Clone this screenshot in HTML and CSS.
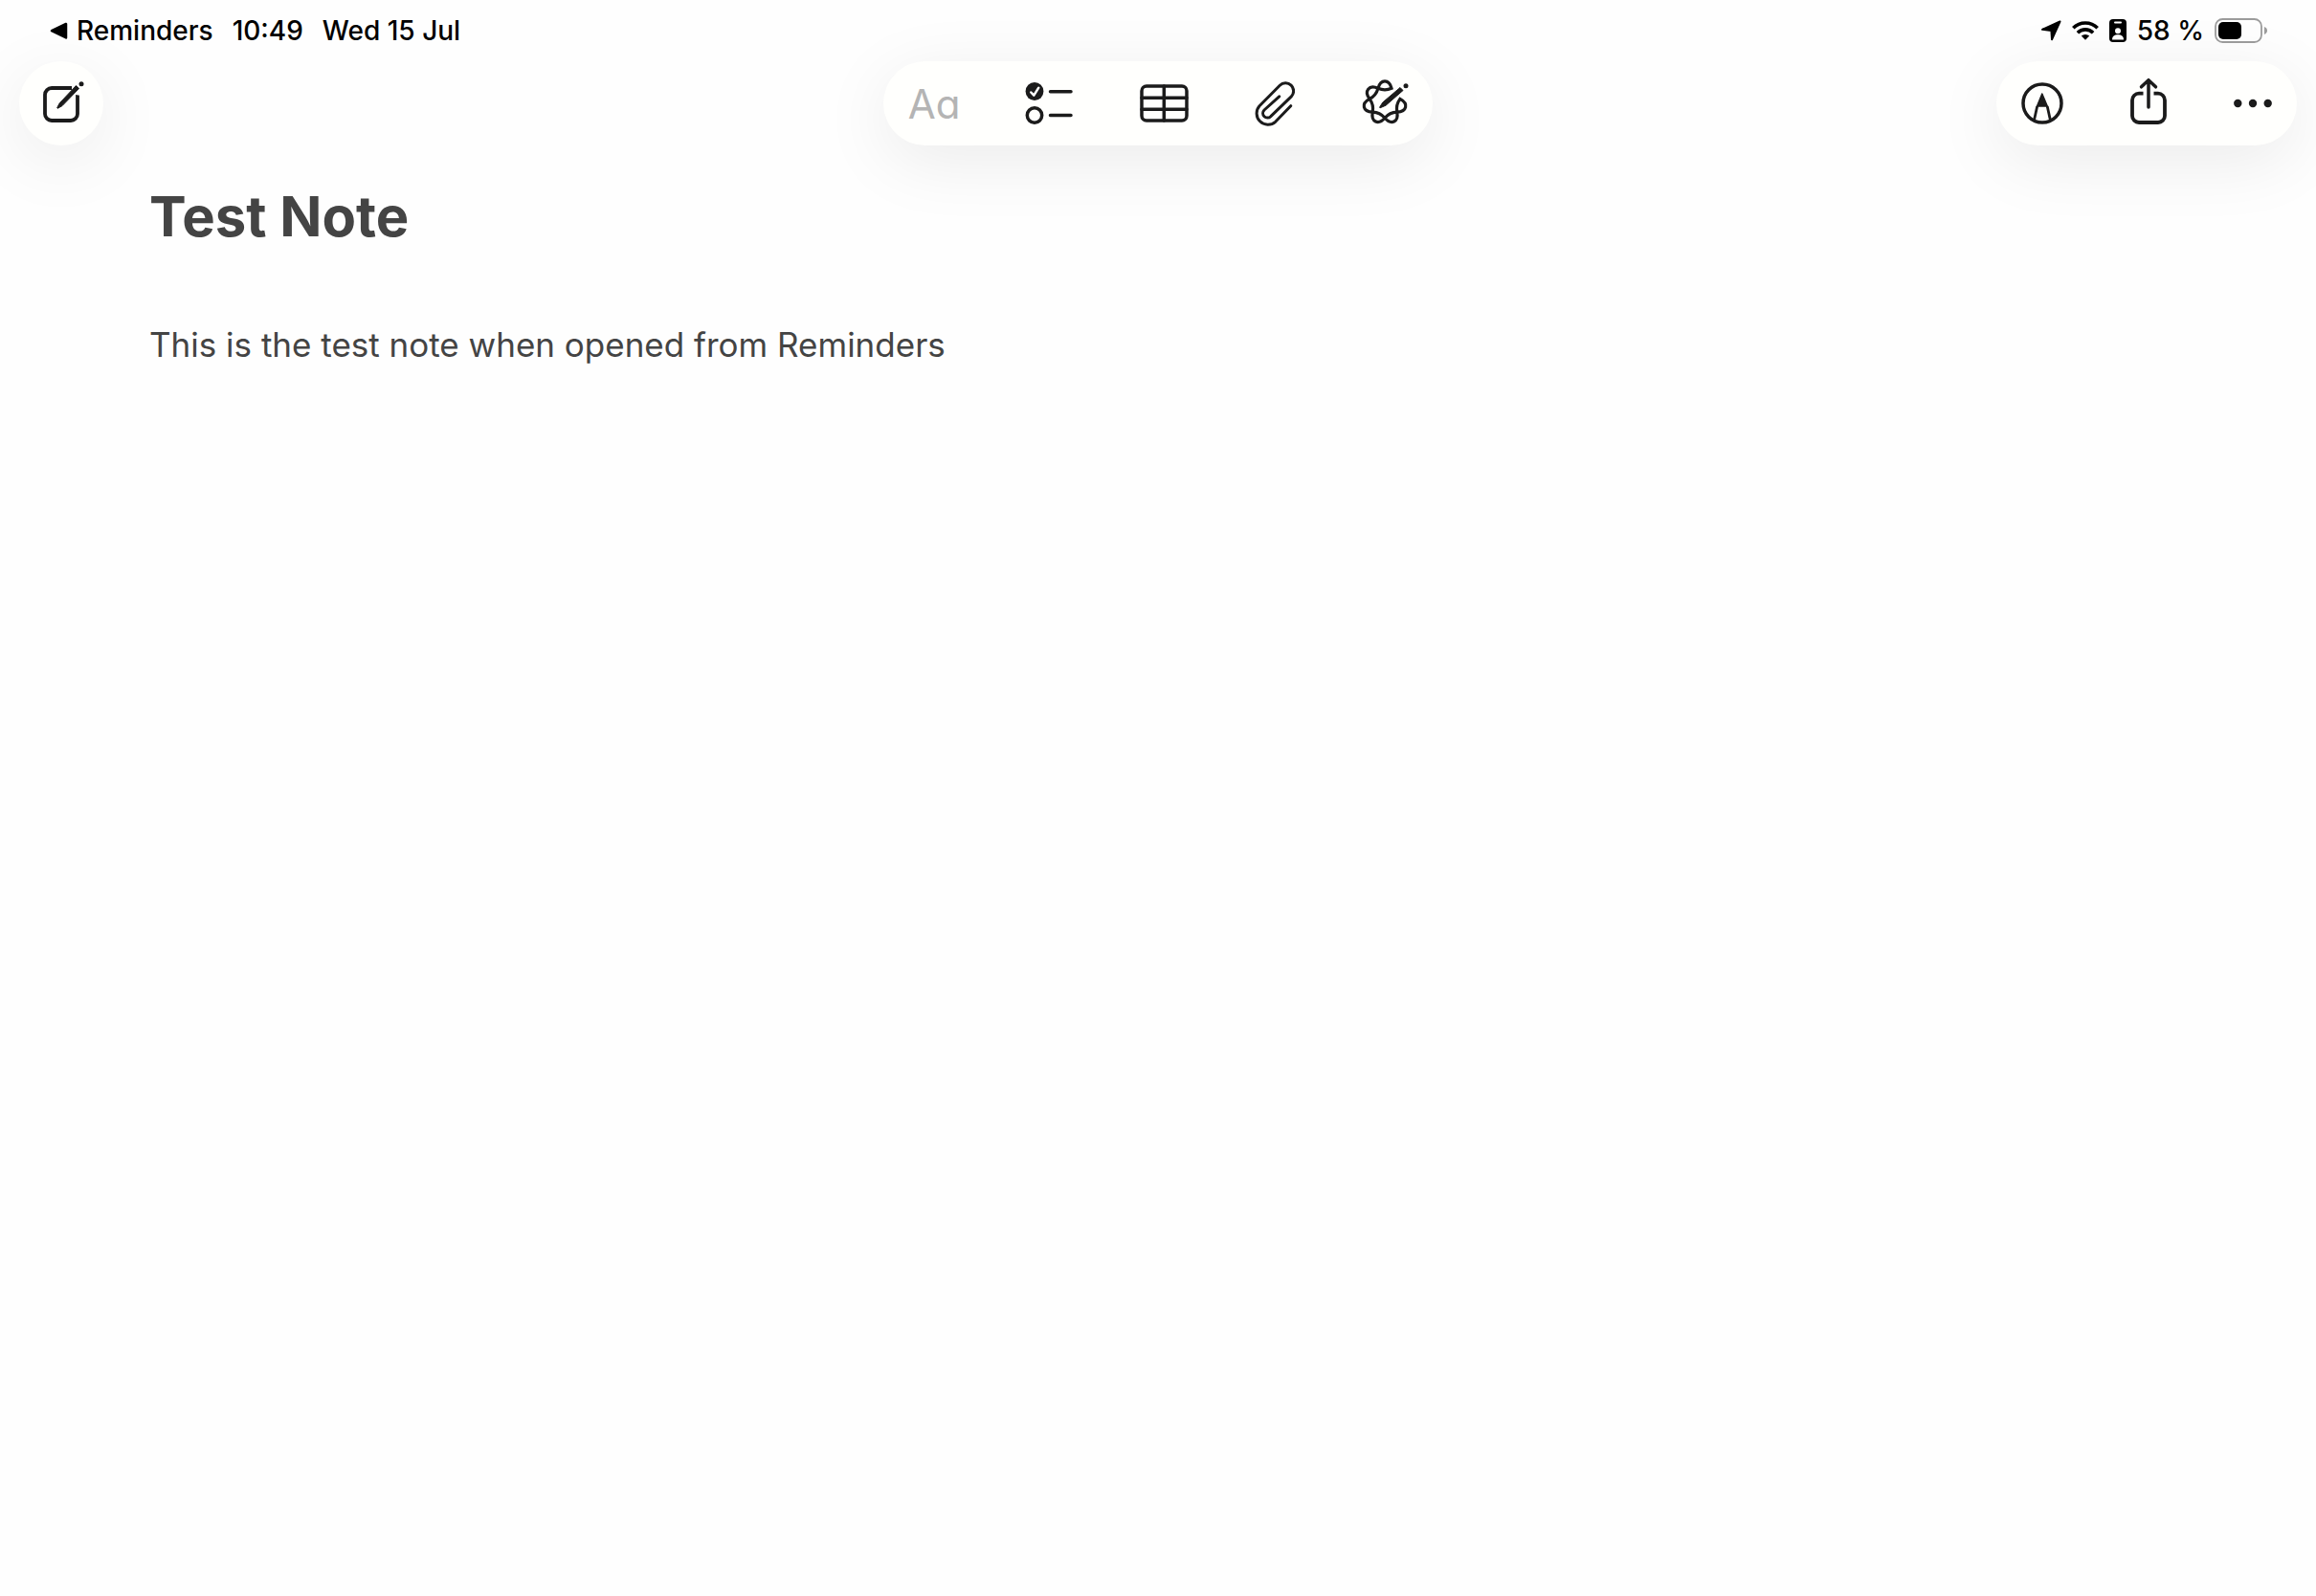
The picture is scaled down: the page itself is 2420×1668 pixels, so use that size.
FILE: index.html
```html
<!DOCTYPE html>
<html lang="en">
<head>
    <meta charset="UTF-8">
    <meta name="viewport" content="width=device-width, initial-scale=1.0">
    <title>Test Note</title>
    <link rel="stylesheet" href="styles.css">
</head>
<body>
    <div class="status-bar">
        <div class="status-left">
            <a class="back-link" href="#reminders">
                <svg width="20" height="20" viewBox="0 0 20 20" aria-hidden="true">
                    <path d="M2 10.200 17 3v14.400z" fill="#000" stroke="#000" stroke-width="2.500" stroke-linejoin="round"/>
                </svg>
                Reminders
            </a>
            <span>10:49</span>
            <span>Wed 15 Jul</span>
        </div>
        <div class="status-right">
            <svg width="22" height="22" viewBox="0 0 22 22" aria-hidden="true">
                <path d="M20.500 1.500 2 9.800l9.400 1.200.600 9.300z" fill="#000" stroke="#000" stroke-width="2" stroke-linejoin="round"/>
            </svg>
            <svg width="28" height="22" viewBox="0 0 28 22" aria-hidden="true">
                <g fill="none" stroke="#000" stroke-width="3.600">
                    <path d="M1.300 8.300a18 18 0 0 1 25.400 0"/>
                    <path d="M5.900 13.200a11.500 11.500 0 0 1 16.200 0"/>
                </g>
                <path d="M9.800 16.600a6 6 0 0 1 8.400 0L14 20.700z"/>
            </svg>
            <svg width="18" height="24" viewBox="0 0 18 24" aria-hidden="true">
                <rect x="0" y="0" width="18" height="24" rx="4"/>
                <rect x="5" y="2.500" width="8" height="2" rx="1" fill="#fff"/>
                <circle cx="9" cy="12.200" r="3" fill="#fff"/>
                <path d="M3 21.500c0-3.600 2.500-5.200 6-5.200s6 1.600 6 5.200z" fill="#fff"/>
            </svg>
            <span>58 %</span>
            <svg class="battery" width="56" height="26" viewBox="0 0 56 26" role="img" aria-label="Battery">
                <rect x="1" y="1" width="48" height="24" rx="7.500" fill="none" stroke="#9b9b9b" stroke-width="1.800"/>
                <rect x="4" y="4" width="24" height="18" rx="5"/>
                <path d="M52 9c2 .700 3 2.300 3 4s-1 3.300-3 4z" fill="#9b9b9b"/>
            </svg>
        </div>
    </div>

    <header class="toolbar">
        <div class="pill pill-round">
            <button type="button" aria-label="New note">
                <svg width="48" height="48" viewBox="0 0 48 48">
                    <path d="M35 8H14a7 7 0 0 0-7 7v20a7 7 0 0 0 7 7h20a7 7 0 0 0 7-7V14" fill="none" stroke="#1b1b1b" stroke-width="3.800"/>
                    <path d="M35 4h8l2 12-6-1z" fill="#fffffd"/>
                    <path d="M39.500 5.500l3 3L25 26.600l-4.800 2.700-.500-.600 2.500-4.800z" stroke="#1b1b1b" stroke-width="1" stroke-linejoin="round"/>
                    <circle cx="45" cy="3.800" r="2.500"/>
                </svg>
            </button>
        </div>

        <div class="pill pill-tools">
            <button type="button" class="format" aria-label="Format" disabled>Aa</button>
            <button type="button" aria-label="Checklist">
                <svg width="50" height="48" viewBox="0 0 50 48">
                    <circle cx="10" cy="11.500" r="9.400"/>
                    <path d="M6.300 12.500l3 3.200 5-8" class="line check"/>
                    <circle cx="10" cy="36.500" r="7.700" class="line"/>
                    <path d="M26.500 11.700h21.500M26.500 36.500h21.500" class="line"/>
                </svg>
            </button>
            <button type="button" aria-label="Table">
                <svg width="52" height="48" viewBox="0 0 52 48">
                    <rect x="3" y="6" width="47" height="36" rx="5" class="line"/>
                    <path d="M26.300 6v36M3 18.200h47M3 30.300h47" class="line"/>
                </svg>
            </button>
            <button type="button" aria-label="Attach">
                <svg width="42" height="48" viewBox="0 0 42 48">
                    <path d="M37.700 26.700 21.700 43.300A11.800 11.800 0 0 1 5 26.700L26.300 5.300A8.300 8.300 0 0 1 38.300 16.900L16.800 37.700A4.700 4.700 0 0 1 10 31L25.700 16.800" class="line clip"/>
                </svg>
            </button>
            <button type="button" aria-label="Writing tools">
                <svg width="50" height="52" viewBox="0 0 50 52">
                    <defs>
                        <path id="petal" d="M-7.070-14.690C-4.400-24.700 4.400-24.700 7.070-14.690C2.500-12.700-2.500-12.700-7.070-14.690z"/>
                    </defs>
                    <g transform="translate(25 25)" fill="none" stroke="#1b1b1b" stroke-width="3.200">
                        <use href="#petal"/>
                        <use href="#petal" transform="rotate(102.857)"/>
                        <use href="#petal" transform="rotate(154.286)"/>
                        <use href="#petal" transform="rotate(205.714)"/>
                        <use href="#petal" transform="rotate(257.143)"/>
                        <use href="#petal" transform="rotate(308.571)"/>
                    </g>
                    <path d="M41 9.500l3 3-18 15.700-6 2.600-.500-.500 3.300-5.300z" stroke="#1b1b1b" stroke-width="1" stroke-linejoin="round"/>
                    <circle cx="47" cy="7.700" r="2.500"/>
                </svg>
            </button>
        </div>

        <div class="pill pill-end">
            <button type="button" aria-label="Markup">
                <svg width="44" height="44" viewBox="0 0 44 44">
                    <circle cx="22" cy="22" r="20" class="line"/>
                    <path d="M21.800 12 16.500 25h10.800z" stroke="#1b1b1b" stroke-width="1.500" stroke-linejoin="round"/>
                    <path d="M16.700 25l-3.200 14.500M27.200 25l3.200 14.500" fill="none" stroke="#1b1b1b" stroke-width="2.800"/>
                </svg>
            </button>
            <button type="button" aria-label="Share">
                <svg width="38" height="54" viewBox="0 0 38 54">
                    <path d="M13.500 16.700H9a7 7 0 0 0-7 7V40a7 7 0 0 0 7 7h20a7 7 0 0 0 7-7V23.700a7 7 0 0 0-7-7h-4.500" fill="none" stroke="#1b1b1b" stroke-width="3.800"/>
                    <path d="M19 3v28M11.500 9.800 19 2.700l7.500 7.100" class="line"/>
                </svg>
            </button>
            <button type="button" aria-label="More">
                <svg width="40" height="10" viewBox="0 0 40 10">
                    <circle cx="4.300" cy="5" r="4.200"/>
                    <circle cx="20" cy="5" r="4.200"/>
                    <circle cx="35.700" cy="5" r="4.200"/>
                </svg>
            </button>
        </div>
    </header>

    <main class="note">
        <h1>Test Note</h1>
        <p>This is the test note when opened from Reminders</p>
    </main>
</body>
</html>
```
FILE: styles.css
```css
* {
    box-sizing: border-box;
}
body {
    margin: 0;
    min-height: 100vh;
    background: #fefefe;
    color: #444;
    font-family: Inter, "Liberation Sans", sans-serif;
}
svg {
    display: block;
}
.status-bar {
    position: relative;
    z-index: 1;
    display: flex;
    justify-content: space-between;
    align-items: center;
    height: 64px;
    padding: 0 50px 0 52px;
    color: #000;
    font-size: 28px;
    font-weight: 500;
}
.status-left {
    display: flex;
    align-items: center;
    gap: 20px;
}
.status-right {
    display: flex;
    align-items: center;
    gap: 11px;
}
.back-link {
    display: flex;
    align-items: center;
    gap: 8px;
    color: inherit;
    text-decoration: none;
}
.toolbar {
    display: grid;
    grid-template-columns: 1fr auto 1fr;
    align-items: center;
    padding: 0 20px;
}
.pill {
    display: flex;
    align-items: center;
    justify-content: center;
    gap: 69px;
    height: 88px;
    padding: 0 26px;
    border-radius: 44px;
    background: #fffffd;
    box-shadow: 0 16px 72px rgba(0, 0, 0, 0.08);
}
.pill-round {
    width: 88px;
    padding: 0;
}
.pill-tools {
    padding: 0 25px 0 27px;
}
.pill-end {
    justify-self: end;
    gap: 70px;
}
button {
    padding: 0;
    border: none;
    background: none;
    color: #1b1b1b;
    font-family: inherit;
    cursor: pointer;
}
button svg {
    fill: #1b1b1b;
}
.line {
    fill: none;
    stroke: #1b1b1b;
    stroke-width: 3.5px;
    stroke-linecap: round;
    stroke-linejoin: round;
}
.check {
    stroke: #fff;
    stroke-width: 2.5px;
}
.clip {
    stroke-width: 3px;
}
.format {
    display: flex;
    justify-content: center;
    width: 52px;
    color: #b4b4b4;
    font-size: 42px;
    font-feature-settings: "cv11";
    cursor: default;
}
.note {
    padding: 36px 156px;
}
.note h1 {
    margin: 0;
    font-size: 58px;
    line-height: 76px;
}
.note p {
    margin: 72px 0 0;
    font-size: 35px;
    line-height: 48px;
}
```
